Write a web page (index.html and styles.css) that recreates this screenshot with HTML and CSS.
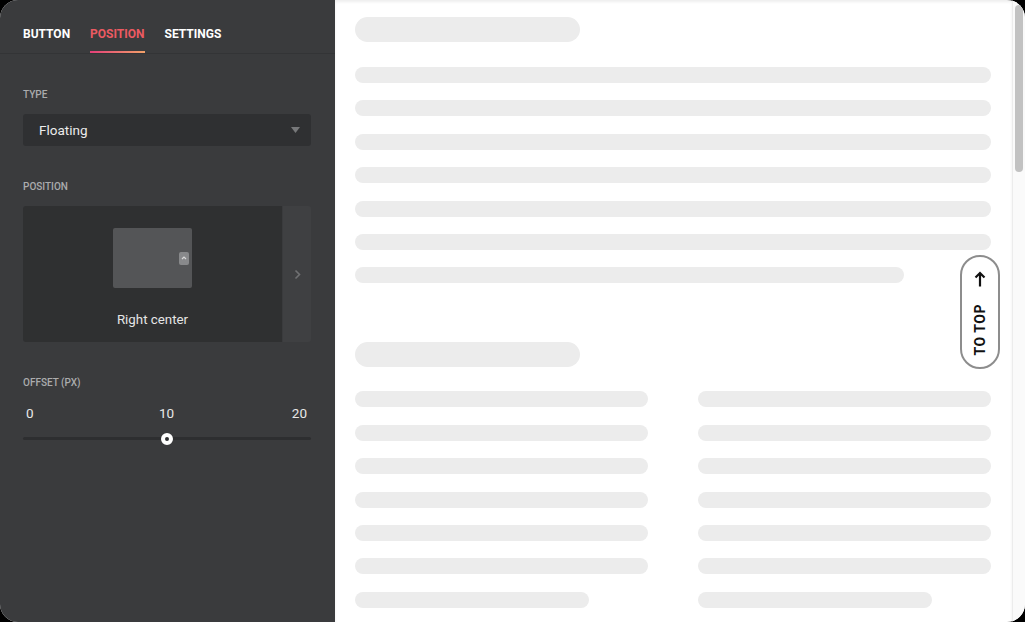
FILE: index.html
```html
<!DOCTYPE html>
<html>
<head>
<meta charset="utf-8">
<link rel="stylesheet" href="styles.css">
</head>
<body>
<div class="app">
  <aside class="panel">
    <nav class="tabs">
      <div class="tab">BUTTON</div>
      <div class="tab active">POSITION</div>
      <div class="tab">SETTINGS</div>
    </nav>
    <div class="body">
      <div class="label first">TYPE</div>
      <div class="select">
        <span>Floating</span>
        <svg class="caret" width="9" height="6" viewBox="0 0 9 6"><path d="M0 0H9L4.5 6Z" fill="#77787a"/></svg>
      </div>
      <div class="label">POSITION</div>
      <div class="card">
        <div class="card-main">
          <div class="mini">
            <div class="mini-btn">
              <svg width="6" height="4" viewBox="0 0 6 4"><path d="M1 3L3 1L5 3" fill="none" stroke="#d8d8d8" stroke-width="1.2"/></svg>
            </div>
          </div>
          <div class="card-title">Right center</div>
        </div>
        <div class="card-next">
          <svg width="7" height="11" viewBox="0 0 7 11"><path d="M1.5 1.5L5.5 5.5L1.5 9.5" fill="none" stroke="#707173" stroke-width="1.6"/></svg>
        </div>
      </div>
      <div class="label">OFFSET (PX)</div>
      <div class="scale"><span class="s-min">0</span><span class="s-mid">10</span><span class="s-max">20</span></div>
      <div class="slider">
        <div class="track"></div>
        <div class="thumb"></div>
      </div>
    </div>
  </aside>
  <main class="content">
    <div class="page">
      <div class="sk-title"></div>
      <div class="sk-lines">
        <div class="sk-line"></div>
        <div class="sk-line"></div>
        <div class="sk-line"></div>
        <div class="sk-line"></div>
        <div class="sk-line"></div>
        <div class="sk-line"></div>
        <div class="sk-line short"></div>
      </div>
      <div class="sk-title second"></div>
      <div class="sk-cols">
        <div class="sk-lines">
          <div class="sk-line"></div>
          <div class="sk-line"></div>
          <div class="sk-line"></div>
          <div class="sk-line"></div>
          <div class="sk-line"></div>
          <div class="sk-line"></div>
          <div class="sk-line shorter"></div>
        </div>
        <div class="sk-lines">
          <div class="sk-line"></div>
          <div class="sk-line"></div>
          <div class="sk-line"></div>
          <div class="sk-line"></div>
          <div class="sk-line"></div>
          <div class="sk-line"></div>
          <div class="sk-line shorter"></div>
        </div>
      </div>
    </div>
    <div class="to-top">
      <svg width="12" height="16" viewBox="0 0 12 16"><path d="M6 15.5V2M1.5 6.5L6 2L10.5 6.5" fill="none" stroke="#111" stroke-width="2.2"/></svg>
      <span class="to-top-text">TO TOP</span>
    </div>
  </main>
  <div class="scrollbar"><div class="scroll-thumb"></div></div>
</div>
</body>
</html>
```

FILE: styles.css
```css
html, body {
  margin: 0;
  padding: 0;
  background: #000;
}
body {
  font-family: Roboto, "Noto Sans", sans-serif;
}
.app {
  width: 1025px;
  height: 622px;
  display: flex;
  border-radius: 18px;
  overflow: hidden;
  background: #fff;
}
.panel {
  width: 335px;
  flex: none;
  background: #3a3b3d;
  color: #fff;
}
.tabs {
  display: flex;
  gap: 20px;
  padding: 0 23px;
  height: 53px;
  border-bottom: 1px solid #333436;
}
.tab {
  padding-top: 27px;
  font-size: 12px;
  line-height: 14px;
  font-weight: 700;
  color: #fff;
  letter-spacing: 0;
}
.tab::after {
  content: "";
  display: block;
  height: 2px;
  margin-top: 10px;
}
.tab.active {
  color: #ec5a62;
}
.tab.active::after {
  background: linear-gradient(90deg, #e33f79, #f2a169);
}
.body {
  padding: 0 24px 0 23px;
}
.label {
  font-size: 10px;
  line-height: 12px;
  font-weight: 500;
  color: #abacad;
  margin-top: 35px;
  margin-bottom: 13px;
}
.select {
  height: 32px;
  background: #2f3032;
  border-radius: 3px;
  display: flex;
  align-items: center;
  justify-content: space-between;
  padding: 0 11px 0 16px;
  font-size: 13.5px;
  color: #ececec;
}
.card {
  display: flex;
  height: 136px;
  border-radius: 3px;
  overflow: hidden;
}
.card-main {
  flex: 1;
  background: #2f3031;
  display: flex;
  flex-direction: column;
  align-items: center;
  padding-top: 22px;
}
.mini {
  width: 79px;
  height: 60px;
  background: #545557;
  border-radius: 2px;
  display: flex;
  align-items: center;
  justify-content: flex-end;
  padding-right: 3px;
  box-sizing: border-box;
}
.mini-btn {
  width: 10px;
  height: 13px;
  background: #88898b;
  border-radius: 2px;
  display: flex;
  align-items: center;
  justify-content: center;
}
.card-title {
  margin-top: 24px;
  font-size: 13.3px;
  line-height: 16px;
  color: #e6e6e6;
}
.card-next {
  width: 28px;
  margin-left: 1px;
  background: #3f4042;
  display: flex;
  align-items: center;
  justify-content: center;
}
.scale {
  display: grid;
  grid-template-columns: 1fr auto 1fr;
  padding: 0 4px 0 3px;
  font-size: 13.5px;
  line-height: 16px;
  color: #e8e8e8;
  margin-top: 16px;
}
.s-min { justify-self: start; }
.s-mid { justify-self: center; }
.s-max { justify-self: end; }
.slider {
  position: relative;
  height: 12px;
  margin-top: 12px;
}
.track {
  position: absolute;
  left: 0;
  right: 0;
  top: 4px;
  height: 3px;
  border-radius: 2px;
  background: #2d2e30;
}
.thumb {
  position: absolute;
  left: 138px;
  top: 0;
  width: 12px;
  height: 12px;
  border-radius: 50%;
  background: #2d2e30;
  box-sizing: border-box;
  border: 4px solid #fff;
}
.content {
  flex: 1;
  position: relative;
  box-shadow: inset 0 2px 3px rgba(0, 0, 0, 0.07);
}
.page {
  padding: 17px 21px 0 20px;
}
.sk-title {
  width: 225px;
  height: 25px;
  border-radius: 13px;
  background: #ececec;
}
.sk-title.second {
  margin-top: 59px;
}
.sk-lines {
  display: flex;
  flex-direction: column;
  gap: 17.4px;
  margin-top: 25px;
}
.sk-title.second + .sk-cols .sk-lines {
  margin-top: 24px;
}
.sk-line {
  height: 16px;
  border-radius: 8px;
  background: #ececec;
}
.sk-line.short {
  width: 86.3%;
}
.sk-line.shorter {
  width: 80%;
}
.sk-cols {
  display: grid;
  grid-template-columns: 1fr 1fr;
  column-gap: 50px;
}
.to-top {
  position: absolute;
  left: 625px;
  top: 255px;
  width: 40px;
  height: 114px;
  box-sizing: border-box;
  border: 2px solid #8d8d8d;
  border-radius: 20px;
  background: #fff;
  display: flex;
  flex-direction: column;
  align-items: center;
  padding-top: 14px;
}
.to-top-text {
  margin-top: 17px;
  writing-mode: vertical-rl;
  transform: rotate(180deg);
  font-size: 14px;
  font-weight: 700;
  color: #111;
  letter-spacing: 0.5px;
  line-height: 15px;
}
.scrollbar {
  width: 13px;
  flex: none;
  background: #fafafa;
  border-left: 1px solid #ececec;
  box-sizing: border-box;
  padding: 5px 2px 0 2px;
}
.scroll-thumb {
  height: 167px;
  border-radius: 4px;
  background: #c2c2c2;
}
```
